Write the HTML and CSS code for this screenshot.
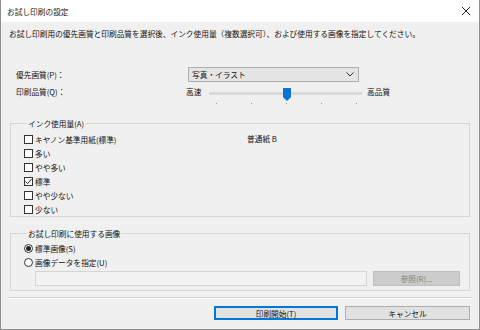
FILE: index.html
```html
<!DOCTYPE html>
<html lang="ja">
<head>
<meta charset="utf-8">
<link rel="stylesheet" href="styles.css">
</head>
<body>
<div class="window">
  <div class="titlebar">
    <span class="title">お試し印刷の設定</span>
    <svg class="close" width="10" height="10" viewBox="0 0 10 10"><path d="M1 1L9 9M9 1L1 9" stroke="#222" stroke-width="1" fill="none"/></svg>
  </div>
  <div class="content">
    <p class="desc">お試し印刷用の優先画質と印刷品質を選択後、インク使用量（複数選択可）、および使用する画像を指定してください。</p>
    <div class="row row-quality">
      <span class="label">優先画質(P)：</span>
      <div class="select">
        <span>写真・イラスト</span>
        <svg class="chev" width="8" height="5" viewBox="0 0 8 5"><path d="M0.5 0.5L4 4L7.5 0.5" stroke="#333" stroke-width="1" fill="none"/></svg>
      </div>
    </div>
    <div class="row row-print">
      <span class="label label-print">印刷品質(Q)：</span>
      <span class="end end-low">高速</span>
      <div class="slider">
        <div class="track"></div>
        <div class="thumb"></div>
        <div class="ticks"><i></i><i></i><i></i><i></i><i></i></div>
      </div>
      <span class="end end-high">高品質</span>
    </div>
    <fieldset class="group group-ink">
      <legend>インク使用量(A)</legend>
      <div class="ink-cols">
        <div class="checks">
          <div class="opt"><span class="box"></span>キヤノン基準用紙(標準)</div>
          <div class="opt"><span class="box"></span>多い</div>
          <div class="opt"><span class="box"></span>やや多い</div>
          <div class="opt"><span class="box checked"><svg width="7" height="7" viewBox="0 0 7 7"><path d="M0.5 3.5L2.6 5.6L6.5 1" stroke="#222" stroke-width="1" fill="none"/></svg></span>標準</div>
          <div class="opt"><span class="box"></span>やや少ない</div>
          <div class="opt"><span class="box"></span>少ない</div>
        </div>
        <div class="paper">普通紙 B</div>
      </div>
    </fieldset>
    <fieldset class="group group-image">
      <legend>お試し印刷に使用する画像</legend>
      <div class="opt"><span class="radio on"></span>標準画像(S)</div>
      <div class="opt"><span class="radio"></span>画像データを指定(U)</div>
      <div class="file-row">
        <div class="field"></div>
        <div class="btn btn-disabled">参照(R)...</div>
      </div>
    </fieldset>
    <div class="sep"></div>
    <div class="buttons">
      <div class="btn btn-default">印刷開始(T)</div>
      <div class="btn btn-cancel">キャンセル</div>
    </div>
  </div>
</div>
</body>
</html>
```
FILE: styles.css
```css
* { box-sizing: border-box; }
html, body { margin: 0; padding: 0; }
body {
  font-family: "Noto Sans CJK JP", "Noto Sans", sans-serif;
  font-size: 7.7px;
  color: #111111;
  background: #ffffff;
}
.window {
  width: 480px;
  height: 330px;
  background: #f0f0f0;
  border: 1px solid #8e8e8e;
  border-top: none;
  display: flex;
  flex-direction: column;
}
.titlebar {
  height: 22px;
  background: #ffffff;
  display: flex;
  align-items: center;
  justify-content: space-between;
  padding: 0 7px 0 6px;
  flex: none;
}
.title { line-height: 11px; color: #222; }
.close { display: block; margin-right: 1px; }
.content {
  padding: 0 9px 0 9px;
  display: flex;
  flex-direction: column;
}
.desc {
  margin: 6px 0 0 -1px;
  line-height: 11px;
  white-space: nowrap;
}
.row { display: flex; }
.row-quality {
  margin-top: 28px;
  height: 15px;
  align-items: center;
  padding-left: 6px;
}
.label { width: 172px; line-height: 11px; }
.select {
  width: 171px;
  height: 15px;
  background: #e5e5e5;
  border: 1px solid #adadad;
  display: flex;
  align-items: center;
  justify-content: space-between;
  padding: 0 4px 0 3px;
  line-height: 11px;
}
.chev { display: block; }
.row-print {
  margin-top: 4px;
  height: 18px;
  align-items: flex-start;
  padding-left: 6px;
}
.label-print { width: 170px; line-height: 12px; }
.end { line-height: 12px; }
.end-low { width: 23px; }
.slider {
  position: relative;
  width: 153px;
  height: 18px;
}
.track {
  margin-top: 6px;
  height: 3px;
  background: #dadada;
}
.thumb {
  position: absolute;
  left: 74px;
  top: 2px;
  width: 8px;
  height: 13px;
  background: #0a74d6;
  clip-path: polygon(0 0, 100% 0, 100% 72%, 50% 100%, 0 72%);
}
.ticks {
  display: flex;
  justify-content: space-between;
  padding: 0 5px 0 7px;
  margin-top: 8px;
}
.ticks i {
  display: block;
  width: 1px;
  height: 1px;
  background: #9a9a9a;
}
.end-high { margin-left: 5px; }
.group {
  margin: 0;
  border: 1px solid #d6d6d6;
  min-width: 0;
}
.group legend {
  padding: 0 1px;
  margin-left: 3px;
  line-height: 11px;
}
.group-ink {
  margin-top: 14px;
  padding: 3px 0 0 13px;
}
.ink-cols { display: flex; }
.checks { width: 223px; }
.paper { line-height: 12px; padding-top: 1px; }
.opt {
  height: 14px;
  display: flex;
  align-items: center;
  line-height: 11px;
}
.box {
  width: 9px;
  height: 9px;
  border: 1px solid #333;
  background: #fff;
  margin-right: 2px;
  display: flex;
  align-items: center;
  justify-content: center;
  flex: none;
}
.box svg { display: block; }
.radio {
  width: 9px;
  height: 9px;
  border: 1px solid #333;
  border-radius: 50%;
  background: #fff;
  margin-right: 2px;
  display: flex;
  align-items: center;
  justify-content: center;
  flex: none;
}
.radio.on::after {
  content: "";
  width: 5px;
  height: 5px;
  border-radius: 50%;
  background: #222;
}
.group-image {
  margin-top: 11px;
  padding: 2px 0 4px 13px;
}
.file-row {
  display: flex;
  margin-top: 2px;
  padding-left: 11px;
  gap: 6px;
}
.field {
  width: 332px;
  height: 15px;
  background: #f2f2f2;
  border: 1px solid #d4d4d4;
}
.btn {
  height: 15px;
  display: flex;
  align-items: center;
  justify-content: center;
  line-height: 11px;
}
.btn-disabled {
  width: 87px;
  background: #cccccc;
  border: 1px solid #bfbfbf;
  color: #838383;
}
.sep {
  margin-top: 6px;
  height: 2px;
  border-top: 1px solid #d0d0d0;
  border-bottom: 1px solid #ffffff;
  margin-left: -1px;
  margin-right: -1px;
}
.buttons {
  display: flex;
  justify-content: flex-end;
  gap: 7px;
  margin-top: 7px;
}
.btn-default {
  width: 124px;
  height: 14px;
  background: #e1e1e1;
  border: 1px solid #0078d7;
  box-shadow: inset 0 0 0 1px #0078d7;
}
.btn-cancel {
  width: 125px;
  height: 14px;
  background: #e1e1e1;
  border: 1px solid #adadad;
}
```
